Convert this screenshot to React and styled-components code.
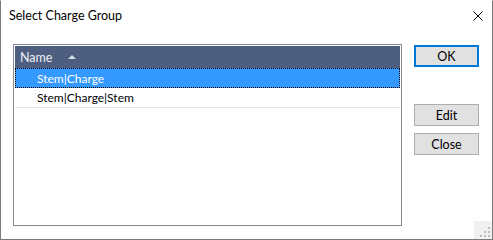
import React from "react";
import styled, { createGlobalStyle } from "styled-components";

const GlobalStyle = createGlobalStyle`
  html, body {
    margin: 0;
    padding: 0;
    background: #ffffff;
  }
  * {
    box-sizing: border-box;
  }
`;

const Window = styled.div`
  position: relative;
  width: 493px;
  height: 240px;
  background: #ffffff;
  border: 1px solid #7a7a7a;
  border-top-color: #ffffff;
  font-family: Lato, "Noto Sans", sans-serif;
  font-size: 12px;
  color: #000000;
`;

const TitleBar = styled.div`
  display: flex;
  align-items: center;
  justify-content: space-between;
  height: 30px;
  padding: 0 9px 0 8px;
`;

const Title = styled.span`
  font-size: 12.5px;
  line-height: 30px;
`;

const CloseIcon = styled.svg`
  display: block;
  width: 10px;
  height: 10px;
`;

const Body = styled.div`
  display: flex;
  gap: 12px;
  padding: 13px 13px 0 12px;
`;

const ListBox = styled.div`
  width: 389px;
  height: 182px;
  border: 1px solid #828790;
  padding: 1px;
  display: flex;
  flex-direction: column;
`;

const Header = styled.div`
  display: flex;
  align-items: center;
  height: 22px;
  padding-left: 5px;
  background: #4d5e80;
  color: #eef0f5;
  font-size: 12.5px;
`;

const SortArrow = styled.span`
  margin-left: 16px;
  width: 0;
  height: 0;
  border-left: 4.5px solid transparent;
  border-right: 4.5px solid transparent;
  border-bottom: 4px solid #d6dbe6;
`;

const Row = styled.div`
  display: flex;
  align-items: center;
  height: 20px;
  background: ${(p) => (p.$selected ? "#3399ff" : "#ffffff")};
  color: ${(p) => (p.$selected ? "#ffffff" : "#000000")};
  border: ${(p) => (p.$selected ? "1px dotted #000000" : "0")};
  border-bottom: 1px ${(p) => (p.$selected ? "dotted #000000" : "solid #e4e4e4")};
  padding-left: ${(p) => (p.$selected ? "21px" : "22px")};
`;

const ButtonColumn = styled.div`
  display: flex;
  flex-direction: column;
  padding-top: 1px;
`;

const Button = styled.button`
  width: 65px;
  height: 22px;
  margin: 0;
  margin-bottom: ${(p) => p.$gapAfter || 0}px;
  padding: 0;
  background: #e1e1e1;
  border: ${(p) => (p.$default ? "2px solid #0078d7" : "1px solid #adadad")};
  font-family: Lato, "Noto Sans", sans-serif;
  font-size: 12.5px;
  color: #000000;
  cursor: pointer;
`;

const Grip = styled.div`
  position: absolute;
  right: 0;
  bottom: 0;
  width: 18px;
  height: 18px;
  background: #f0f0f0;
  display: flex;
  align-items: flex-end;
  justify-content: flex-end;
  padding: 0 2px 2px 0;
`;

const rows = [
  { name: "Stem|Charge", selected: true },
  { name: "Stem|Charge|Stem", selected: false },
];

export default function App() {
  return (
    <>
      <GlobalStyle />
      <Window>
        <TitleBar>
          <Title>Select Charge Group</Title>
          <CloseIcon viewBox="0 0 10 10">
            <path d="M0.5 0.5 L9.5 9.5 M9.5 0.5 L0.5 9.5" stroke="#000" strokeWidth="1" />
          </CloseIcon>
        </TitleBar>
        <Body>
          <ListBox>
            <Header>
              <span>Name</span>
              <SortArrow />
            </Header>
            {rows.map((r) => (
              <Row key={r.name} $selected={r.selected}>
                {r.name}
              </Row>
            ))}
          </ListBox>
          <ButtonColumn>
            <Button $default $gapAfter={37}>OK</Button>
            <Button $gapAfter={7}>Edit</Button>
            <Button>Close</Button>
          </ButtonColumn>
        </Body>
        <Grip>
          <svg width="10" height="10" viewBox="0 0 10 10">
            <rect x="8" y="0" width="2" height="2" fill="#bcbcbc" />
            <rect x="4" y="4" width="2" height="2" fill="#bcbcbc" />
            <rect x="8" y="4" width="2" height="2" fill="#bcbcbc" />
            <rect x="0" y="8" width="2" height="2" fill="#bcbcbc" />
            <rect x="4" y="8" width="2" height="2" fill="#bcbcbc" />
            <rect x="8" y="8" width="2" height="2" fill="#bcbcbc" />
          </svg>
        </Grip>
      </Window>
    </>
  );
}
